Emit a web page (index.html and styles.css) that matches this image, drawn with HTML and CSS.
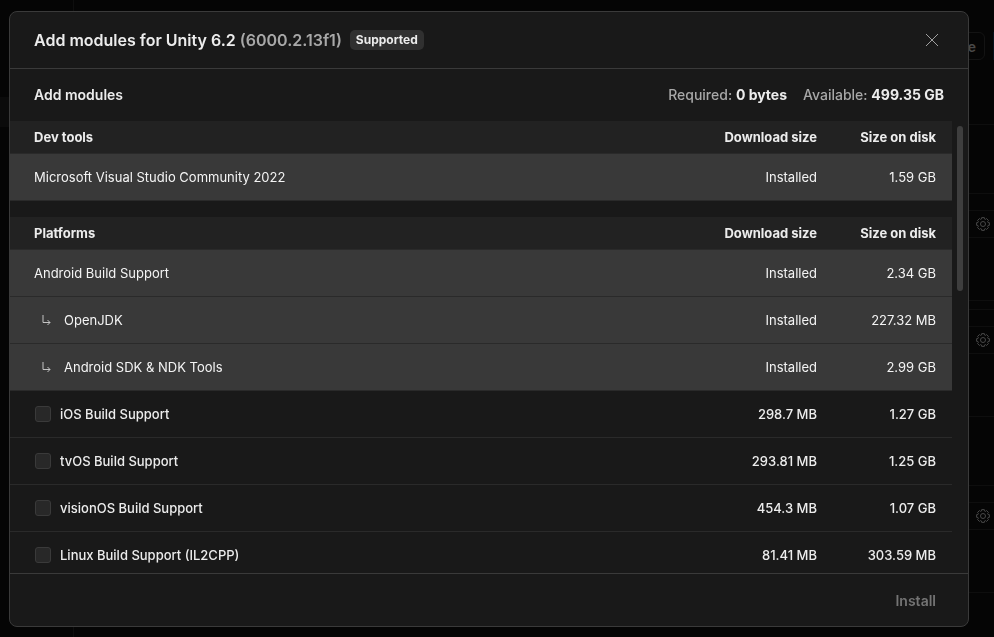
FILE: index.html
```
<!DOCTYPE html>
<html lang="en">
<head>
    <meta charset="UTF-8">
    <meta name="viewport" content="width=device-width, initial-scale=1.0">
    <title>Add modules</title>
    <link rel="stylesheet" href="styles.css">
</head>
<body>

<svg class="sprite" aria-hidden="true">
    <symbol id="gear" viewBox="-7 -7 14 14">
        <path d="M-1.460-5.090-1.350-6.360H1.350L1.460-5.090 2.570-4.630 3.540-5.450 5.450-3.540 4.630-2.570 5.090-1.460 6.360-1.350V1.350L5.090 1.460 4.630 2.570 5.450 3.540 3.540 5.450 2.570 4.630 1.460 5.090 1.350 6.360H-1.350L-1.460 5.090-2.570 4.630-3.540 5.450-5.450 3.540-4.630 2.570-5.090 1.460-6.360 1.350V-1.350L-5.090-1.460-4.630-2.570-5.450-3.540-3.540-5.450-2.570-4.630z"/>
        <circle r="2.500"/>
    </symbol>
    <symbol id="sub" viewBox="0 0 10 12">
        <path d="M1.500 1v7.500h7M6 6l2.500 2.500L6 11"/>
    </symbol>
</svg>

<!-- Installs page, dimmed behind the dialog -->
<div class="page">
    <aside class="sidebar"><div class="sidebar-item"></div></aside>
    <main class="installs">
        <div class="toolbar">
            <button class="locate">Locate</button>
            <button class="primary" aria-label="Install editor"></button>
        </div>
        <div class="tabs"></div>
        <div class="install head"></div>
        <div class="install"><button class="manage" aria-label="Manage"><svg><use href="#gear"/></svg></button></div>
        <div class="install gap"></div>
        <div class="install"><button class="manage" aria-label="Manage"><svg><use href="#gear"/></svg></button></div>
        <div class="install head"></div>
        <div class="install"><button class="manage" aria-label="Manage"><svg><use href="#gear"/></svg></button></div>
    </main>
</div>

<div class="dialog" role="dialog" aria-labelledby="title">
    <header class="dialog-header">
        <h1 id="title">Add modules for Unity 6.2 <span>(6000.2.13f1)</span></h1>
        <span class="badge">Supported</span>
        <button class="close" aria-label="Close">
            <svg viewBox="0 0 14 14"><path d="M1 1l12 12M13 1L1 13"/></svg>
        </button>
    </header>

    <div class="summary">
        <h2>Add modules</h2>
        <p>Required: <b>0 bytes</b></p>
        <p>Available: <b>499.35 GB</b></p>
    </div>

    <div class="modules">
        <div class="list">
            <table>
                <thead>
                    <tr><th>Dev tools</th><th>Download size</th><th>Size on disk</th></tr>
                </thead>
                <tbody>
                    <tr class="installed"><td>Microsoft Visual Studio Community 2022</td><td>Installed</td><td>1.59 GB</td></tr>
                </tbody>
            </table>
            <table>
                <thead>
                    <tr><th>Platforms</th><th>Download size</th><th>Size on disk</th></tr>
                </thead>
                <tbody>
                    <tr class="installed"><td>Android Build Support</td><td>Installed</td><td>2.34 GB</td></tr>
                    <tr class="installed"><td><div class="child"><svg><use href="#sub"/></svg>OpenJDK</div></td><td>Installed</td><td>227.32 MB</td></tr>
                    <tr class="installed"><td><div class="child"><svg><use href="#sub"/></svg>Android SDK &amp; NDK Tools</div></td><td>Installed</td><td>2.99 GB</td></tr>
                    <tr><td><label><input type="checkbox">iOS Build Support</label></td><td>298.7 MB</td><td>1.27 GB</td></tr>
                    <tr><td><label><input type="checkbox">tvOS Build Support</label></td><td>293.81 MB</td><td>1.25 GB</td></tr>
                    <tr><td><label><input type="checkbox">visionOS Build Support</label></td><td>454.3 MB</td><td>1.07 GB</td></tr>
                    <tr><td><label><input type="checkbox">Linux Build Support (IL2CPP)</label></td><td>81.41 MB</td><td>303.59 MB</td></tr>
                </tbody>
            </table>
        </div>
        <div class="scrollbar"></div>
    </div>

    <footer class="dialog-footer">
        <button class="install-btn" disabled>Install</button>
    </footer>
</div>

</body>
</html>
```
FILE: styles.css
```
* {
    box-sizing: border-box;
}

body {
    margin: 0;
    height: 100vh;
    overflow: hidden;
    background: #050505;
    color: #ececec;
    font-family: Inter, "Liberation Sans", sans-serif;
    font-size: 13px;
    line-height: 20px;
}

h1, h2, p {
    margin: 0;
}

button {
    font-family: inherit;
    background: none;
    border: none;
    padding: 0;
}

.sprite {
    display: none;
}

/* page behind */
.page {
    display: flex;
    height: 100vh;
}

.sidebar {
    width: 74px;
    padding-top: 97px;
    border-right: 1px solid #0e0e0e;
}

.sidebar-item {
    height: 30px;
    background: #0b0b0b;
}

.installs {
    flex: 1;
    min-width: 0;
}

.toolbar {
    display: flex;
    justify-content: flex-end;
    gap: 8px;
    padding-top: 32px;
}

.locate {
    width: 72px;
    height: 28px;
    padding-right: 8px;
    border: 1px solid #131313;
    border-radius: 6px;
    color: #484848;
    font-size: 14px;
    font-weight: 600;
    text-align: right;
}

.primary {
    width: 1px;
    height: 28px;
    background: #06121c;
}

.tabs {
    height: 65px;
    border-bottom: 1px solid #0e0e0e;
}

.install {
    display: flex;
    align-items: flex-start;
    justify-content: flex-end;
    height: 107px;
    padding-top: 16px;
    border-bottom: 1px solid #0e0e0e;
}

.install.head {
    height: 69px;
}

.install.gap {
    height: 9px;
    padding: 0;
}

.manage {
    width: 32px;
    height: 28px;
    padding-left: 13px;
    border: 1px solid #0e0e0e;
    border-right: none;
}

.manage svg {
    display: block;
    width: 14px;
    height: 14px;
    fill: none;
    stroke: #484848;
}

/* dialog */
.dialog {
    position: fixed;
    inset: 11px 25px 10px 9px;
    display: flex;
    flex-direction: column;
    background: #191919;
    border: 1px solid #3a3a3a;
    border-radius: 8px;
    overflow: hidden;
}

.dialog-header {
    display: flex;
    align-items: center;
    gap: 8px;
    height: 57px;
    padding: 0 24px;
    border-bottom: 1px solid #3a3a3a;
}

h1 {
    font-size: 16px;
    font-weight: 600;
}

h1 span {
    color: #a8a8a8;
}

.badge {
    padding: 0 6px;
    background: #303030;
    border-radius: 5px;
    font-size: 12px;
    font-weight: 700;
}

.close {
    margin-left: auto;
    width: 24px;
    height: 24px;
    padding: 5px;
}

.close svg {
    display: block;
    width: 14px;
    height: 14px;
    fill: none;
    stroke: #a0a0a0;
}

.summary {
    display: flex;
    align-items: center;
    gap: 16px;
    height: 52px;
    padding: 0 24px;
    color: #a8a8a8;
    font-size: 14px;
    font-weight: 500;
}

h2 {
    margin-right: auto;
    color: #ececec;
    font-size: 14px;
    font-weight: 600;
}

.summary b {
    color: #ececec;
    font-weight: 700;
}

.modules {
    position: relative;
    flex: 1;
    min-height: 0;
}

.list {
    height: 100%;
    margin-right: 16px;
    overflow: hidden;
}

table {
    width: 100%;
    margin-bottom: 16px;
    table-layout: fixed;
    border-collapse: separate;
    border-spacing: 0;
}

th, td {
    height: 47px;
    padding: 0 16px 0 0;
    border-bottom: 1px solid #2a2a2a;
    text-align: right;
    font-weight: 500;
}

th {
    height: 33px;
    background: #222222;
    font-weight: 700;
}

th:first-child, td:first-child {
    padding-left: 24px;
    text-align: left;
}

th:nth-child(2) {
    width: 160px;
}

th:nth-child(3) {
    width: 119px;
}

.installed td {
    background: #393939;
    color: #f4f4f4;
    font-weight: 400;
}

.child {
    display: flex;
    align-items: center;
    gap: 12px;
    padding-left: 7px;
}

.child svg {
    width: 11px;
    height: 12px;
    fill: none;
    stroke: #c4c4c4;
}

label {
    display: flex;
    align-items: center;
    gap: 9px;
}

input[type="checkbox"] {
    appearance: none;
    width: 16px;
    height: 16px;
    margin: 0 0 0 1px;
    background: #282828;
    border: 1px solid #3a3a3a;
    border-radius: 3px;
}

.scrollbar {
    position: absolute;
    top: 5px;
    right: 5px;
    width: 6px;
    height: 165px;
    background: #3e3e3e;
    border-radius: 3px;
}

.dialog-footer {
    display: flex;
    align-items: center;
    justify-content: flex-end;
    height: 53px;
    padding: 0 32px;
    border-top: 1px solid #3a3a3a;
}

.install-btn {
    color: #747474;
    font-size: 14px;
    font-weight: 600;
}
```
